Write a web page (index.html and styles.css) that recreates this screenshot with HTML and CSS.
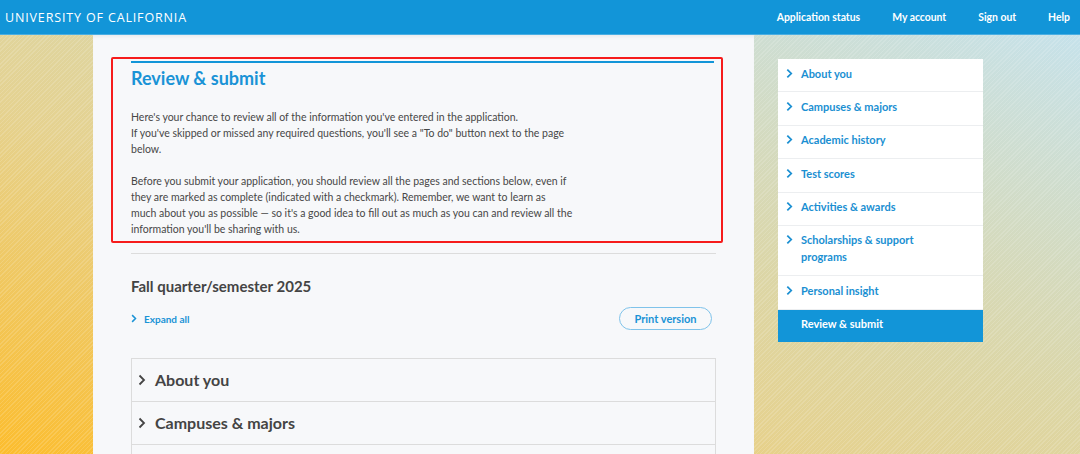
FILE: index.html
```html
<!DOCTYPE html>
<html lang="en">
<head>
<meta charset="utf-8">
<title>Review & submit</title>
<link rel="stylesheet" href="styles.css">
</head>
<body>
<header class="topbar">
  <div class="brand">UNIVERSITY OF CALIFORNIA</div>
  <nav class="topnav">
    <a href="#">Application status</a>
    <a href="#">My account</a>
    <a href="#">Sign out</a>
    <a href="#">Help</a>
  </nav>
</header>
<div class="stage">
  <main class="panel">
    <section class="intro">
      <div class="intro-inner">
        <h1 class="title">Review &amp; submit</h1>
        <p class="copy">Here's your chance to review all of the information you've entered in the application.<br>If you've skipped or missed any required questions, you'll see a "To do" button next to the page<br>below.</p>
        <p class="copy">Before you submit your application, you should review all the pages and sections below, even if<br>they are marked as complete (indicated with a checkmark). Remember, we want to learn as<br>much about you as possible — so it's a good idea to fill out as much as you can and review all the<br>information you'll be sharing with us.</p>
      </div>
    </section>
    <hr class="divider">
    <h2 class="term">Fall quarter/semester 2025</h2>
    <div class="tools">
      <a class="expand" href="#"><svg class="chev-sm" viewBox="0 0 8 12" width="6" height="9"><path d="M1.5 1.5 L6 6 L1.5 10.5" fill="none" stroke="currentColor" stroke-width="2"/></svg>Expand all</a>
      <button class="print">Print version</button>
    </div>
    <div class="accordion">
      <div class="acc-row"><svg class="chev" viewBox="0 0 8 12" width="8" height="12"><path d="M1.5 1.5 L6 6 L1.5 10.5" fill="none" stroke="currentColor" stroke-width="1.8"/></svg>About you</div>
      <div class="acc-row"><svg class="chev" viewBox="0 0 8 12" width="8" height="12"><path d="M1.5 1.5 L6 6 L1.5 10.5" fill="none" stroke="currentColor" stroke-width="1.8"/></svg>Campuses &amp; majors</div>
      <div class="acc-row"></div>
    </div>
  </main>
  <aside class="sidenav">
    <a class="side-item" href="#"><svg class="chev-side" viewBox="0 0 8 12" width="7" height="11"><path d="M1.5 1.5 L6 6 L1.5 10.5" fill="none" stroke="currentColor" stroke-width="2"/></svg><span>About you</span></a>
    <a class="side-item" href="#"><svg class="chev-side" viewBox="0 0 8 12" width="7" height="11"><path d="M1.5 1.5 L6 6 L1.5 10.5" fill="none" stroke="currentColor" stroke-width="2"/></svg><span>Campuses &amp; majors</span></a>
    <a class="side-item" href="#"><svg class="chev-side" viewBox="0 0 8 12" width="7" height="11"><path d="M1.5 1.5 L6 6 L1.5 10.5" fill="none" stroke="currentColor" stroke-width="2"/></svg><span>Academic history</span></a>
    <a class="side-item" href="#"><svg class="chev-side" viewBox="0 0 8 12" width="7" height="11"><path d="M1.5 1.5 L6 6 L1.5 10.5" fill="none" stroke="currentColor" stroke-width="2"/></svg><span>Test scores</span></a>
    <a class="side-item" href="#"><svg class="chev-side" viewBox="0 0 8 12" width="7" height="11"><path d="M1.5 1.5 L6 6 L1.5 10.5" fill="none" stroke="currentColor" stroke-width="2"/></svg><span>Activities &amp; awards</span></a>
    <a class="side-item" href="#"><svg class="chev-side" viewBox="0 0 8 12" width="7" height="11"><path d="M1.5 1.5 L6 6 L1.5 10.5" fill="none" stroke="currentColor" stroke-width="2"/></svg><span>Scholarships &amp; support<br>programs</span></a>
    <a class="side-item" href="#"><svg class="chev-side" viewBox="0 0 8 12" width="7" height="11"><path d="M1.5 1.5 L6 6 L1.5 10.5" fill="none" stroke="currentColor" stroke-width="2"/></svg><span>Personal insight</span></a>
    <a class="side-item active" href="#"><span>Review &amp; submit</span></a>
  </aside>
</div>
</body>
</html>
```
FILE: styles.css
```css
* { box-sizing: border-box; }
html, body { margin: 0; padding: 0; }
body {
  width: 1080px;
  height: 454px;
  overflow: hidden;
  font-family: Lato, "Noto Sans", sans-serif;
  background:
    repeating-linear-gradient(135deg, rgba(255,255,255,0.14) 0 1px, rgba(255,255,255,0) 1px 3px),
    linear-gradient(to top right, #fcbd2e 0%, #e5d290 38%, #dcd6a6 55%, #c4e3f1 100%);
}
a { text-decoration: none; }

.topbar {
  height: 35px;
  background: #1295d8;
  border-bottom: 1px solid #4aaee2;
  display: flex;
  align-items: center;
  justify-content: space-between;
  padding: 0 0 0 5px;
}
.brand {
  color: #fff;
  font-family: "Open Sans", sans-serif;
  font-size: 12.5px;
  letter-spacing: 0.85px;
}
.topnav { display: flex; padding-right: 10px; }
.topnav a {
  color: #fff;
  font-weight: 700;
  font-size: 10.4px;
  margin-left: 32px;
}

.stage {
  display: flex;
  align-items: flex-start;
  padding-left: 93px;
  gap: 24px;
}
.panel {
  width: 661px;
  height: 419px;
  overflow: hidden;
  background: #f7f8fa;
  padding: 22px 38px 0 38px;
  box-shadow: inset 0 4px 4px -3px rgba(0,0,0,0.08);
}
.intro {
  margin: 0 -7px 0 -20px;
  border: 2px solid #f61c1c;
  border-radius: 2px;
  padding: 2px 7px 4px 18px;
}
.intro-inner { border-top: 2px solid #1295d8; }
.title {
  margin: 3px 0 0;
  color: #1a93d6;
  font-size: 18px;
  line-height: 24px;
  font-weight: 700;
}
.copy {
  margin: 19px 0 0;
  color: #474747;
  font-size: 10.5px;
  line-height: 16px;
}
.copy + .copy { margin-top: 16px; }
.divider {
  margin: 10px 0 0;
  border: 0;
  border-top: 1px solid #dcdcdc;
}
.term {
  margin: 22px 0 0;
  font-size: 15px;
  line-height: 20px;
  font-weight: 700;
  color: #444;
}
.tools {
  margin-top: 11px;
  display: flex;
  justify-content: space-between;
  align-items: center;
  padding-right: 4px;
}
.expand {
  color: #1a93d6;
  font-weight: 700;
  font-size: 10px;
  display: flex;
  align-items: center;
}
.chev-sm { margin-right: 7px; }
.print {
  font-family: Lato, sans-serif;
  width: 93px;
  height: 23px;
  border: 1px solid #7fc3ea;
  border-radius: 12px;
  background: transparent;
  color: #1a93d6;
  font-weight: 700;
  font-size: 11px;
  padding: 0;
}
.accordion {
  margin-top: 28px;
  border: 1px solid #dcdcdc;
  border-bottom: 0;
}
.acc-row {
  height: 43px;
  border-bottom: 1px solid #dcdcdc;
  display: flex;
  align-items: center;
  padding: 0 0 1px 6px;
  color: #444;
  font-size: 16px;
  font-weight: 700;
}
.chev { margin-right: 9px; color: #444; }

.sidenav {
  margin-top: 24px;
  width: 205px;
  background: #fff;
  display: flex;
  flex-direction: column;
}
.side-item {
  display: flex;
  align-items: flex-start;
  padding: 5.5px 8px 9.9px 8px;
  border-bottom: 1px solid #eceef0;
  color: #1a8fd2;
  font-weight: 700;
  font-size: 11px;
  line-height: 17px;
}
.chev-side { margin: 3px 8px 0 0; flex: none; }
.side-item.active {
  background: #1295d8;
  color: #fff;
  padding-left: 23px;
  border-bottom: 0;
}
```
